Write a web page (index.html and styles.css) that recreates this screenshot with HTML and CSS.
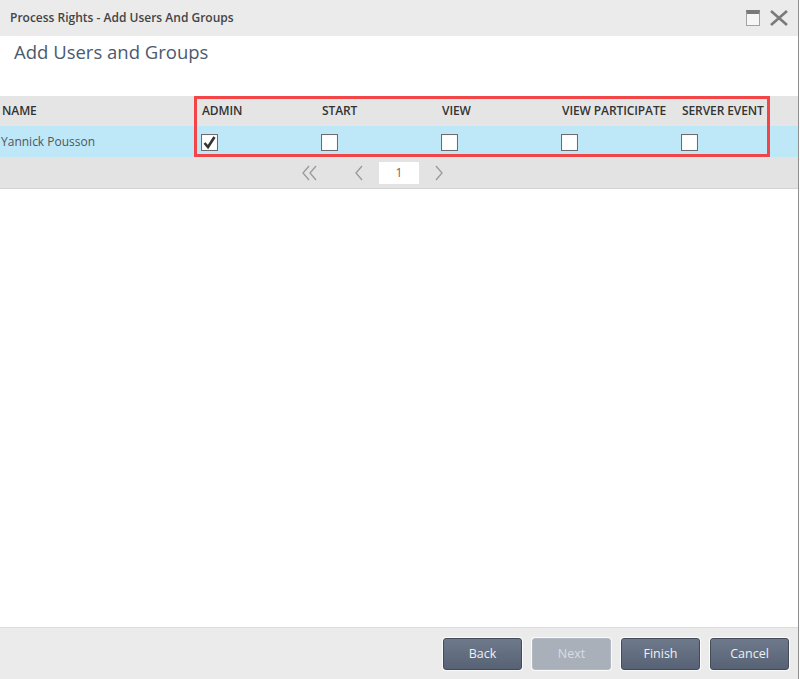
FILE: index.html
```html
<!DOCTYPE html>
<html lang="en">
<head>
  <meta charset="UTF-8">
  <title>Process Rights - Add Users And Groups</title>
  <link rel="stylesheet" href="styles.css">
</head>
<body>
  <div class="window">
    <div class="titlebar">
      <span class="title">Process Rights - Add Users And Groups</span>
      <div class="win-buttons">
        <span class="btn-max"></span>
        <svg class="btn-close" width="20" height="16" viewBox="0 0 20 16">
          <path d="M2 1 L18 15 M18 1 L2 15" stroke="#7a7a7a" stroke-width="2.6" fill="none"/>
        </svg>
      </div>
    </div>

    <h1>Add Users and Groups</h1>

    <div class="grid">
      <div class="row head">
        <div class="cell name">NAME</div>
        <div class="cell">ADMIN</div>
        <div class="cell">START</div>
        <div class="cell">VIEW</div>
        <div class="cell">VIEW PARTICIPATE</div>
        <div class="cell">SERVER EVENT</div>
      </div>
      <div class="row data">
        <div class="cell name">Yannick Pousson</div>
        <div class="cell"><span class="check on">
          <svg width="15" height="15" viewBox="0 0 15 15"><path d="M2.5 8 L6 12 L12.5 2" stroke="#333" stroke-width="2.6" fill="none"/></svg>
        </span></div>
        <div class="cell"><span class="check"></span></div>
        <div class="cell"><span class="check"></span></div>
        <div class="cell"><span class="check"></span></div>
        <div class="cell"><span class="check"></span></div>
      </div>
      <div class="highlight"></div>

      <div class="pager">
        <span class="arrow first">
          <svg width="20" height="16" viewBox="0 0 20 16"><path d="M9 1 L3 8 L9 15 M16 1 L10 8 L16 15" stroke="#9a9a9a" stroke-width="1.3" fill="none"/></svg>
        </span>
        <span class="arrow">
          <svg width="20" height="16" viewBox="0 0 20 16"><path d="M13 1 L7 8 L13 15" stroke="#9a9a9a" stroke-width="1.3" fill="none"/></svg>
        </span>
        <span class="page">1</span>
        <span class="arrow">
          <svg width="20" height="16" viewBox="0 0 20 16"><path d="M7 1 L13 8 L7 15" stroke="#9a9a9a" stroke-width="1.3" fill="none"/></svg>
        </span>
        <span class="arrow last"></span>
      </div>
    </div>

    <div class="spacer"></div>

    <div class="footer">
      <button class="btn">Back</button>
      <button class="btn" disabled>Next</button>
      <button class="btn">Finish</button>
      <button class="btn">Cancel</button>
    </div>
  </div>
</body>
</html>
```

FILE: styles.css
```css
html, body { margin: 0; padding: 0; background: #fff; }
body { font-family: "Open Sans", "Liberation Sans", sans-serif; }

.window {
  width: 798px; height: 679px;
  border-right: 1px solid #8e8e8e;
  display: flex; flex-direction: column;
  overflow: hidden;
}

.titlebar {
  height: 36px; background: #ebebeb;
  display: flex; align-items: center; justify-content: space-between;
  padding: 0 9px 2px 10px; box-sizing: border-box;
}
.title { font-size: 12px; font-weight: 600; color: #444; }
.win-buttons { display: flex; align-items: center; gap: 9px; margin-top: 2px; }
.btn-max {
  display: block; width: 12px; height: 11px;
  border: 1.5px solid #a2a2a2; border-top: 4px solid #7a7a7a;
  background: #f6f6f6;
}
.btn-close { display: block; }

h1 {
  margin: 0; height: 60px;
  padding: 3px 0 0 14px; box-sizing: border-box;
  font-size: 18.5px; font-weight: 400; color: #4b5a6f;
}

.grid { position: relative; }
.row { display: grid; grid-template-columns: 200px 120px 120px 120px 120px 118px; }
.head { height: 30px; background: #e5e5e5; align-items: center; }
.head .cell { font-size: 12px; font-weight: 600; color: #333; padding-left: 2px; padding-bottom: 2px; letter-spacing: -0.1px; }
.data { height: 31px; background: #bee8f8; align-items: center; }
.data .cell { font-size: 12px; color: #555; padding-left: 1px; }
.cell { white-space: nowrap; }

.check {
  display: block; width: 15px; height: 15px; margin-top: 1px;
  border: 1px solid #6c6c6c; background: #fff;
  box-shadow: inset 0 0 1px #ccc;
}
.check svg { display: block; }

.highlight {
  position: absolute; left: 194px; top: 0;
  width: 576px; height: 61px; box-sizing: border-box;
  border: 3px solid #f24548;
}

.pager {
  height: 31px; background: #e3e3e3;
  border-bottom: 1px solid #d3d3d3;
  display: flex; align-items: center; justify-content: center;
}
.arrow { display: block; width: 20px; height: 16px; }
.arrow svg { display: block; }
.arrow.first { margin-right: 29px; }
.arrow.last { margin-left: 29px; }
.page {
  width: 40px; height: 22px; margin: 0 10px;
  background: #fff; font-size: 12px; color: #666;
  display: flex; align-items: center; justify-content: center;
}

.spacer { flex: 1; }

.footer {
  height: 51px; background: #ebebeb;
  border-top: 1px solid #dcdcdc;
  display: flex; align-items: center; justify-content: flex-end;
  gap: 10px; padding-right: 9px;
}
.btn {
  width: 79px; height: 32px;
  font-family: "Open Sans", "Liberation Sans", sans-serif;
  font-size: 12.5px; color: #eef0f3;
  background: linear-gradient(#6e7a8c, #576274);
  border: 1px solid #434b59; border-radius: 3px;
  box-shadow: 0 0 0 1px #fafafa;
}
.btn:disabled {
  background: #a9b0ba; color: #d9dde3; border-color: #b3b9c3;
}
```
